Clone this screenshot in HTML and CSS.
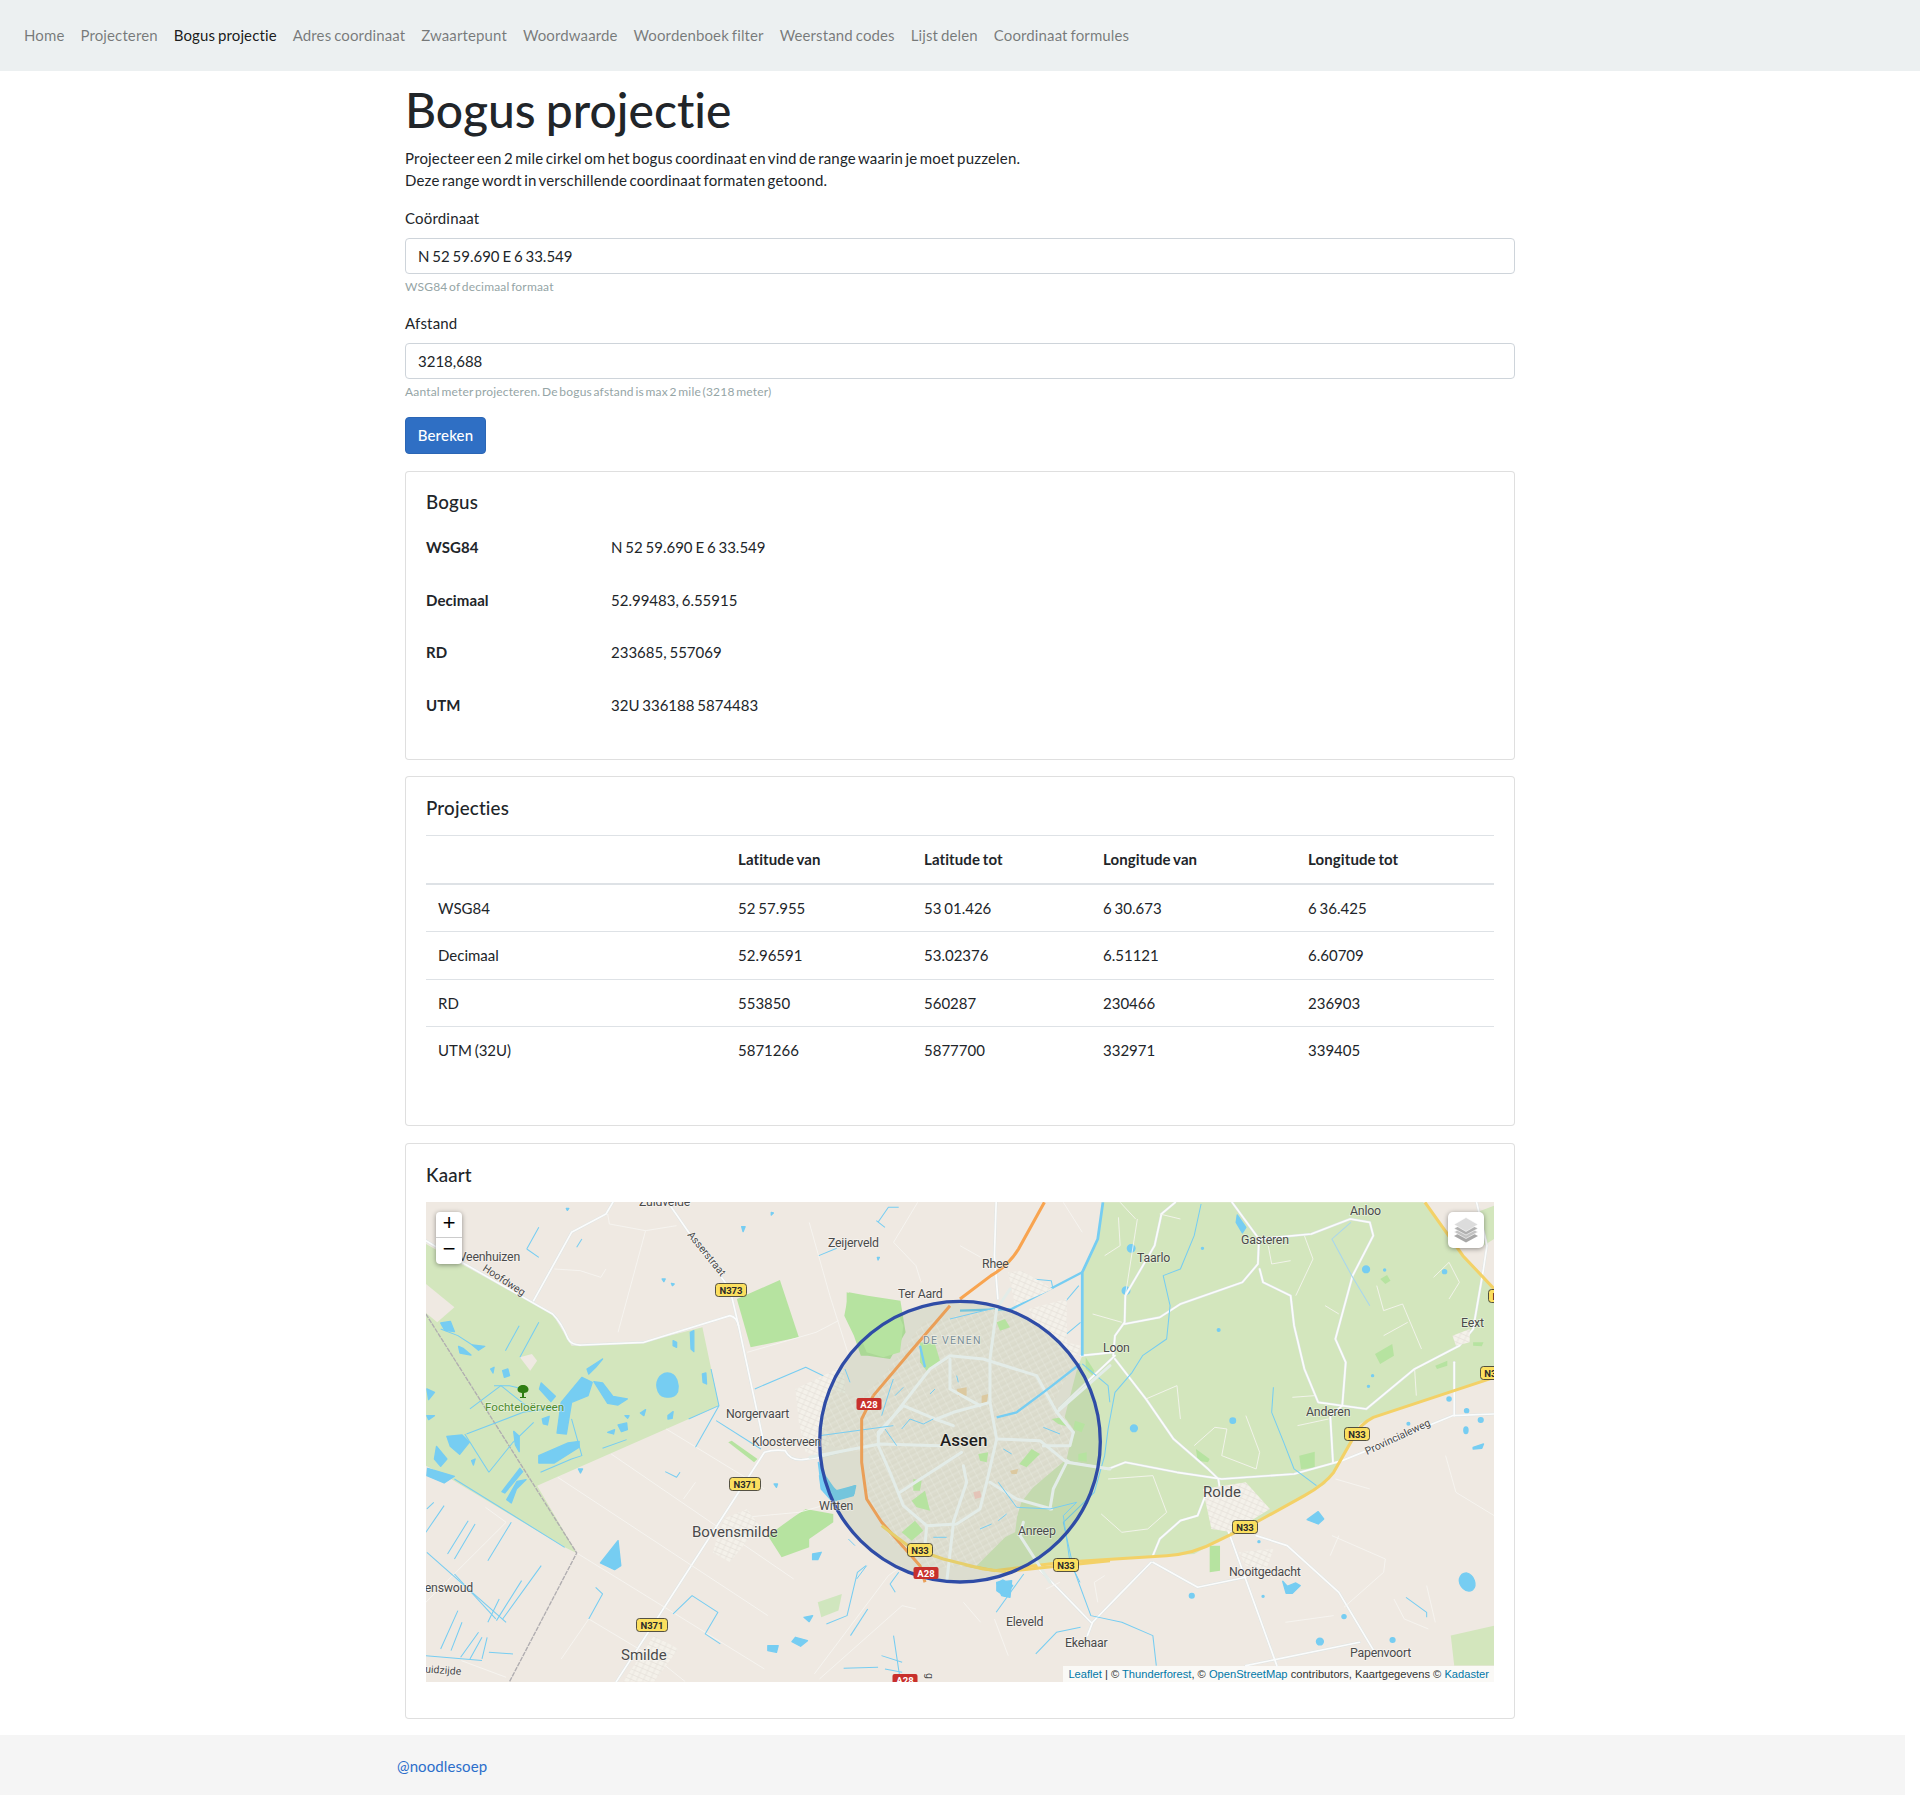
FILE: index.html
```html
<!DOCTYPE html>
<html lang="nl">
<head>
<meta charset="utf-8">
<title>Bogus projectie</title>
<link rel="stylesheet" href="styles.css">
</head>
<body>
<nav class="navbar">
  <a class="nav-link" href="#">Home</a>
  <a class="nav-link" href="#">Projecteren</a>
  <a class="nav-link active" href="#">Bogus projectie</a>
  <a class="nav-link" href="#">Adres coordinaat</a>
  <a class="nav-link" href="#">Zwaartepunt</a>
  <a class="nav-link" href="#">Woordwaarde</a>
  <a class="nav-link" href="#">Woordenboek filter</a>
  <a class="nav-link" href="#">Weerstand codes</a>
  <a class="nav-link" href="#">Lijst delen</a>
  <a class="nav-link" href="#">Coordinaat formules</a>
</nav>
<main class="container">
  <h1 class="page-title">Bogus projectie</h1>
  <p class="intro">Projecteer een 2 mile cirkel om het bogus coordinaat en vind de range waarin je moet puzzelen.<br>Deze range wordt in verschillende coordinaat formaten getoond.</p>
  <div class="form-group">
    <label class="form-label" for="coord">Coördinaat</label>
    <input class="form-input" id="coord" type="text" value="N 52 59.690 E 6 33.549">
    <small class="form-help">WSG84 of decimaal formaat</small>
  </div>
  <div class="form-group">
    <label class="form-label" for="dist">Afstand</label>
    <input class="form-input" id="dist" type="text" value="3218,688">
    <small class="form-help">Aantal meter projecteren. De bogus afstand is max 2 mile (3218 meter)</small>
  </div>
  <button class="btn" type="button">Bereken</button>

  <section class="card card-bogus">
    <h5 class="card-title">Bogus</h5>
    <dl class="facts">
      <dt>WSG84</dt><dd>N 52 59.690 E 6 33.549</dd>
      <dt>Decimaal</dt><dd>52.99483, 6.55915</dd>
      <dt>RD</dt><dd>233685, 557069</dd>
      <dt>UTM</dt><dd>32U 336188 5874483</dd>
    </dl>
  </section>

  <section class="card card-table">
    <h5 class="card-title">Projecties</h5>
    <table class="table">
      <thead>
        <tr><th class="c1"></th><th class="c2">Latitude van</th><th class="c3">Latitude tot</th><th class="c4">Longitude van</th><th class="c5">Longitude tot</th></tr>
      </thead>
      <tbody>
        <tr><td>WSG84</td><td>52 57.955</td><td>53 01.426</td><td>6 30.673</td><td>6 36.425</td></tr>
        <tr><td>Decimaal</td><td>52.96591</td><td>53.02376</td><td>6.51121</td><td>6.60709</td></tr>
        <tr><td>RD</td><td>553850</td><td>560287</td><td>230466</td><td>236903</td></tr>
        <tr><td>UTM (32U)</td><td>5871266</td><td>5877700</td><td>332971</td><td>339405</td></tr>
      </tbody>
    </table>
  </section>

  <section class="card card-map">
    <h5 class="card-title">Kaart</h5>
    <div class="map">
      <svg class="map-svg" viewBox="0 0 1068 480" width="1068" height="480" aria-hidden="true">
        <defs>
          <pattern id="hatch" width="6" height="5" patternUnits="userSpaceOnUse" patternTransform="rotate(24) scale(2.9)">
            <rect width="6" height="5" fill="#f4f1ea"/>
            <path d="M0 2.5H6M3 0V5" stroke="#e2ded5" stroke-width=".6" fill="none"/>
          </pattern>
          <pattern id="hatch-in" width="7" height="6" patternUnits="userSpaceOnUse" patternTransform="rotate(-28) scale(3)">
            <rect width="7" height="6" fill="#dcdccd"/>
            <path d="M0 3H7M3.5 0V6" stroke="#e5e7dc" stroke-width=".6" fill="none"/>
            <path d="M0 1H7" stroke="#d0d1c1" stroke-width=".3" fill="none"/>
          </pattern>
        </defs>
        <rect width="1068" height="480" fill="#efe9e2"/>

        <!-- west half -->
        <g transform="translate(-6,-13) scale(.3444,.3333)">
          <path class="green" d="M17,165L120,225 385,375 440,470 650,460 820,415 868,650 340,890 455,1092 420,1075 90,870 17,830Z"/>
          <path class="beige" d="M17,285L100,355 50,400 17,372Z"/>
          <path class="beige" d="M290,505L325,495 340,515 320,545Z"/>
          <path class="park" d="M920,330L1045,273 1100,445 960,475Z"/>
          <path class="park" d="M895,760L905,755 980,810 970,820Z"/>
          <path class="park" d="M1010,1040L1090,980 1120,960 1200,975 1200,1000 1130,1050 1130,1075 1050,1105Z"/>
          <path class="water" d="M718,552C748,552 752,590 748,608 738,630 702,630 692,608 680,580 695,554 718,552Z"/>
          <path class="water" d="M575,1055L583,1130 565,1142 524,1122Z"/>
          <path class="water" d="M505,578L530,582 560,622 602,630 575,648 545,643Z"/>
          <path class="water" d="M410,640L470,565 500,580 488,620 440,640 425,735 398,732Z"/>
          <path class="water" d="M485,540L530,510 510,535 490,555Z"/>
          <path class="water" d="M78,742L122,738 143,760 115,796 88,772Z"/>
          <path class="water" d="M48,772L78,810 60,832 42,810Z"/>
          <path class="water" d="M22,838L100,862 70,882 20,860Z"/>
          <path class="water" d="M345,800L430,762 462,757 462,775 390,822 345,822Z"/>
          <path class="water" d="M252,932L282,877 308,872 280,900 265,942Z"/>
          <path class="water" d="M238,908L290,838 298,848 246,912Z"/>
          <path class="water" d="M112,472L125,478 148,498 116,492Z"/>
          <path class="water" d="M152,468L188,472 170,484Z"/>
          <path class="water" d="M60,402L88,397 100,428 72,424Z"/>
          <path class="water" d="M352,582L393,622 380,638 347,600Z"/>
          <path class="water" d="M272,727L288,742 288,788 277,768Z"/>
          <path class="water" d="M355,690L375,682 370,708 358,705Z"/>
          <path class="water" d="M595,680L607,680 603,688Z"/>
          <path class="water" d="M720,680L735,668 732,688 720,690Z"/>
          <path class="water" d="M640,672L655,662 650,680Z"/>
          <path class="water" d="M545,730L565,722 562,735Z"/>
          <path class="water" d="M575,708L600,702 602,722 585,728Z"/>
          <path class="water" d="M735,455L745,460 745,475 735,470Z"/>
          <path class="water" d="M785,430L795,425 795,488 787,480Z"/>
          <path class="water" d="M820,555L830,552 832,585 822,580Z"/>
          <path class="water" d="M240,545L255,540 260,560 245,565Z"/>
          <path class="water" d="M205,540L215,535 212,552Z"/>
          <path class="water" d="M20,600L42,610 25,632Z"/>
          <path class="water" d="M20,680L42,680 25,692Z"/>
          <path class="water" d="M150,815L160,810 155,828Z"/>
          <path class="water" d="M460,840L472,840 466,852Z"/>
          <path class="water" d="M1090,1345L1125,1355 1105,1372 1080,1358Z"/>
          <path class="water" d="M1010,1370L1040,1370 1035,1390 1010,1385Z"/>
          <path class="water" d="M1115,1285L1140,1280 1130,1298Z"/>
          <path class="water" d="M1140,1095L1165,1090 1155,1112 1140,1112Z"/>
          <path class="water" d="M1160,860L1210,905 1265,890 1260,915 1195,935 1165,900Z"/>
          <path class="water" d="M1028,885L1038,885 1035,895Z"/>
          <path class="water" d="M703,270L712,270 708,278ZM730,283L738,285 733,290ZM934,113L944,113 938,128ZM1020,70L1026,72 1020,78ZM1328,205L1334,205 1330,213ZM425,58L432,58 428,64Z"/>
          <path class="park" d="M1245,310L1300,320 1395,335 1410,430 1365,510 1300,500 1280,500 1260,440 1232,380Z"/>
          <path class="park" d="M1155,1240L1225,1215 1215,1265 1165,1285Z" opacity=".55"/>

          <g class="road-case">
            <path d="M17,155L130,225 385,375Q410,400 430,450 440,470 470,468L650,460 900,380Q920,385 925,410L1000,770"/>
            <path d="M570,1478L1000,790Q1030,780 1060,785 1075,815 1110,812L1160,805 1290,770"/>
            <path d="M720,40L780,130 900,300 925,410"/>
            <path d="M330,335L440,130 540,75 560,40"/>
          </g>
          <g class="road">
            <path d="M17,155L130,225 385,375Q410,400 430,450 440,470 470,468L650,460 900,380Q920,385 925,410L1000,770"/>
            <path d="M570,1478L1000,790Q1030,780 1060,785 1075,815 1110,812L1160,805 1290,770"/>
            <path d="M720,40L780,130 900,300 925,410"/>
            <path d="M330,335L440,130 540,75 560,40"/>
          </g>
          <g class="lane">
            <path d="M545,75L550,105 655,125 745,110"/>
            <path d="M655,125L575,430"/>
            <path d="M1130,100L1190,320 1245,500"/>
            <path d="M1375,160L1440,230 1455,280M1375,160L1445,40"/>
            <path d="M950,490L1150,430 1215,395"/>
            <path d="M390,240L465,245 525,265 540,240"/>
            <path d="M400,865L1010,1280"/>
            <path d="M555,795L1085,1170"/>
            <path d="M715,720L1000,900"/>
            <path d="M765,930L800,880"/>
            <path d="M410,1410L490,1290 700,1420 770,1478"/>
            <path d="M455,1092L1000,1440"/>
            <path d="M190,955L250,1000 17,1240"/>
            <path d="M1145,1455L1360,1160 1400,1130"/>
            <path d="M1160,1470L1400,1250 1440,1260"/>
            <path d="M120,1415L250,1465"/>
            <path d="M890,990L1100,970 1170,950"/>
          </g>
          <path class="border" d="M17,375L455,1092 260,1478"/>
          <g class="canal">
            <path d="M972,600L1120,535 1190,570"/>
            <path d="M845,540L868,650 780,690"/>
            <path d="M868,650L800,775"/>
            <path d="M860,695L990,780"/>
            <path d="M20,1090L250,1300"/>
            <path d="M100,1155L220,1290"/>
            <path d="M20,960L40,940M17,1030L70,950M80,1095L140,995M100,1110L160,1005M197,1115L265,1000M222,1295L295,1175M197,1300L230,1230M240,1290L352,1130"/>
            <path d="M60,1380L110,1265M90,1385L122,1300M118,1405L170,1330M145,1410L180,1345M180,1410L195,1345"/>
            <path d="M17,1400L180,1415M200,1390L270,1395"/>
            <path d="M100,870L420,1075"/>
            <path d="M490,1290L530,1215 510,1195"/>
            <path d="M735,1275L790,1220 865,1270 828,1335 872,1365"/>
            <path d="M712,848L745,865 755,850"/>
            <path d="M310,180L345,115M310,180L345,205"/>
            <path d="M455,175L470,150"/>
            <path d="M248,485L288,410M290,505L345,400"/>
            <path d="M1330,100L1360,55 1390,55M1325,95L1350,115"/>
            <path d="M1158,200L1210,178"/>
            <path d="M1230,1438L1330,1435"/>
            <path d="M1180,1305L1240,1280 1270,1150 1295,1130"/>
            <path d="M1250,1340L1300,1260"/>
            <path d="M135,735L300,670 430,650"/>
            <path d="M145,660L235,590 320,660"/>
            <path d="M200,850L130,735"/>
            <path d="M200,850L270,760 330,700"/>
            <path d="M350,850L440,810 470,800 440,690"/>
            <path d="M1375,1340L1395,1478M1340,1400L1400,1420M1350,1440L1400,1450"/>
            <path d="M1380,1210L1365,1185 1390,1150"/>
            <path d="M530,778L600,752"/>
            <path d="M215,590L260,590 300,600"/>
            <path d="M60,420L110,440 170,480"/>
          </g>
          <path class="town" d="M1090,600L1230,530 1240,700 1160,800 1120,790 1100,700Z"/>
          <path class="town" d="M880,990L950,960 985,1010 900,1120 850,1090Z"/>
          <path class="town" d="M590,1478L680,1340 750,1380 680,1478Z"/>
        </g>

        <!-- east half -->
        <g transform="translate(534,-13) scale(.3444,.3333)">
          <path class="green" d="M415,40L780,40 1345,40 1460,200 1551,300 1551,565 1200,685 1160,705 1140,750 1085,850 1060,885 1000,920 860,1000 750,1055 680,1095 600,1100 300,1120 100,1145 -20,1125 60,1080 160,1030 170,950 270,820 340,540 355,500 355,250 400,150Z"/>
          <path class="green" d="M1425,1340L1551,1310 1551,1430 1435,1430Z"/>
          <path class="green" d="M1500,70L1551,50 1551,150 1520,170Z"/>
          <path class="park" d="M985,800L1030,788 1030,838 990,840Z"/>
          <path class="park" d="M725,1070L755,1070 755,1145 725,1150Z"/>
          <path class="park" d="M685,780L725,810 720,820 690,815Z"/>
          <path class="park" d="M1205,495L1255,465 1260,500 1220,525Z"/>
          <path class="park" d="M1380,530L1415,515 1415,530 1385,540Z"/>
          <path class="park" d="M1220,270L1240,258 1250,275 1235,285Z"/>
          <path class="park" d="M1490,460L1520,460 1515,472 1490,470Z"/>
          <path class="park" d="M365,505L390,545 385,560 365,540Z"/>
          <path class="water" d="M1470,1152C1493,1157 1503,1190 1488,1203 1470,1215 1447,1190 1450,1170 1454,1157 1460,1152 1470,1152Z"/>
          <path class="water" d="M1040,968L1056,990 1040,1005 1008,992Z"/>
          <path class="water" d="M125,1173L153,1190 130,1222 107,1205 107,1182Z"/>
          <path class="water" d="M937,1177L950,1192 975,1182 988,1190 965,1213 947,1213Z"/>
          <circle class="water" cx="505" cy="718" r="10"/>
          <circle class="water" cx="792" cy="695" r="8"/>
          <circle class="water" cx="482" cy="305" r="11"/>
          <circle class="water" cx="497" cy="178" r="11"/>
          <circle class="water" cx="1179" cy="241" r="10"/>
          <circle class="water" cx="1407" cy="248" r="6"/>
          <circle class="water" cx="1420" cy="630" r="6"/>
          <circle class="water" cx="1471" cy="665" r="6"/>
          <circle class="water" cx="1512" cy="693" r="7"/>
          <ellipse class="water" cx="1469" cy="724" rx="6" ry="10"/>
          <circle class="water" cx="1302" cy="704" r="4"/>
          <circle class="water" cx="673" cy="1220" r="7"/>
          <circle class="water" cx="1115" cy="1283" r="6"/>
          <circle class="water" cx="1045" cy="1358" r="10"/>
          <circle class="water" cx="1256" cy="1353" r="7"/>
          <circle class="water" cx="868" cy="1058" r="3"/>
          <circle class="water" cx="751" cy="423" r="4"/>
          <circle class="water" cx="704" cy="178" r="3"/>
          <circle class="water" cx="1186" cy="592" r="3"/>
          <circle class="water" cx="1198" cy="560" r="3"/>
          <circle class="water" cx="1233" cy="243" r="3"/>
          <circle class="water" cx="880" cy="1222" r="3"/>
          <path class="water" d="M1490,775L1520,765 1515,778 1490,780Z"/>
          <path class="water" d="M805,78L830,115 820,132 802,100Z"/>
          <g class="road-case">
            <path d="M625,40L585,75 565,170 480,320 478,400 450,440 445,500"/>
            <path d="M350,500L445,490M280,665L450,500"/>
            <path d="M478,405L580,385 640,345 820,280 865,225 868,150 790,40"/>
            <path d="M868,150L1020,135 1133,90 1190,100 1200,140 1140,260 1090,450 1120,520 1110,650 1075,680 1083,820"/>
            <path d="M870,240L880,280 960,320 970,410 1000,540 1040,640 1180,660 1320,540 1450,470 1490,420 1520,240 1530,170 1500,40"/>
            <path d="M450,510L540,630 620,750 720,840 750,870 770,1000 920,1430"/>
            <path d="M290,800L320,820 430,840 480,820 630,850 760,870 970,855 1110,815 1430,680 1551,675"/>
            <path d="M1435,680L1435,520"/>
            <path d="M560,1100L580,1050 640,995 690,980 720,900"/>
            <path d="M560,1120L690,1195 830,1165M860,1040L950,1070 1100,1210 1210,1400"/>
            <path d="M555,1120L460,1220 385,1300 370,1340M380,1300L220,1130"/>
            <path d="M830,1430L1160,1360"/>
            <path d="M105,40L100,200 110,330"/>
          </g>
          <g class="road">
            <path d="M625,40L585,75 565,170 480,320 478,400 450,440 445,500"/>
            <path d="M350,500L445,490M280,665L450,500"/>
            <path d="M478,405L580,385 640,345 820,280 865,225 868,150 790,40"/>
            <path d="M868,150L1020,135 1133,90 1190,100 1200,140 1140,260 1090,450 1120,520 1110,650 1075,680 1083,820"/>
            <path d="M870,240L880,280 960,320 970,410 1000,540 1040,640 1180,660 1320,540 1450,470 1490,420 1520,240 1530,170 1500,40"/>
            <path d="M450,510L540,630 620,750 720,840 750,870 770,1000 920,1430"/>
            <path d="M290,800L320,820 430,840 480,820 630,850 760,870 970,855 1110,815 1430,680 1551,675"/>
            <path d="M1435,680L1435,520"/>
            <path d="M560,1100L580,1050 640,995 690,980 720,900"/>
            <path d="M560,1120L690,1195 830,1165M860,1040L950,1070 1100,1210 1210,1400"/>
            <path d="M555,1120L460,1220 385,1300 370,1340M380,1300L220,1130"/>
            <path d="M830,1430L1160,1360"/>
            <path d="M105,40L100,200 110,330"/>
          </g>
          <g class="lane">
            <path d="M630,590L540,630M630,590L640,690"/>
            <path d="M680,770L740,715 775,720 760,800"/>
            <path d="M830,680L870,790 860,840 760,800"/>
            <path d="M430,870L560,860 600,970 545,1020 470,1030 410,975"/>
            <path d="M965,625L1030,620M980,710L1070,690"/>
            <path d="M1320,540L1325,620M1285,345L1230,365 1210,290M1285,345L1340,480"/>
            <path d="M1375,265L1420,220 1450,280 1420,330"/>
            <path d="M1060,350L1100,375M1230,440L1300,400"/>
            <path d="M895,170L905,225 960,215M1000,140L1025,210 975,320"/>
            <path d="M640,90L580,75M510,90L465,40M460,85L465,170 420,200"/>
            <path d="M515,90L480,320M385,375L470,400"/>
            <path d="M1090,870L1190,900M1410,800L1440,910 1551,980"/>
            <path d="M1080,1040L1235,1110 1230,1150 1115,1255M1100,1040L1075,1100"/>
            <path d="M945,1300L1085,1280M1260,1230L1290,1290 1360,1320"/>
            <path d="M1355,1190L1380,1300"/>
            <path d="M420,1160L390,1180 400,1240M250,1200L290,1180"/>
            <path d="M100,1290L140,1400M10,1240L60,1300"/>
            <path d="M300,40L355,130M0,170L60,205"/>
          </g>
          <g class="canal">
            <path d="M700,45L680,140 640,240 590,260 610,350 600,450 530,500 500,550 450,610 430,720 420,800 390,910 300,1000 330,1140 380,1280 470,1300 560,1340 570,1430"/>
            <path d="M910,595L905,670 940,760 970,840 1035,890"/>
            <path d="M220,1395L280,1330 350,1315"/>
            <path d="M105,1270L185,1155"/>
            <path d="M355,525L430,590 435,640"/>
            <path d="M210,270L265,275 270,300"/>
            <path d="M1295,1225L1355,1270 1355,1285"/>
            <path d="M300,345L345,290 M310,435L350,400"/>
          </g>
          <path class="canal-faint" d="M1135,100L1080,150 1140,265 1190,350"/>
          <path class="canal-wide" d="M415,40L400,150 355,250V500"/>
          <path class="canal-mid" d="M355,250L150,360 0,365"/>
          <path class="town" d="M200,360L310,330 310,460 350,470 340,500 250,470Z"/>
          <path class="town" d="M705,900L830,880 900,960 790,1030 730,1020Z"/>
          <path class="town" d="M810,1090L910,1080 890,1140 830,1130Z"/>
          <path class="town" d="M140,250L180,245 270,300 160,350Z"/>
          <path class="town" d="M1430,440L1480,420 1480,460 1440,470Z"/>
          <path class="motorway" d="M245,40L170,180Q140,230 90,260L0,330"/>
          <path class="yellow" d="M1551,565L1200,685Q1160,705 1140,750L1085,850Q1060,885 1000,920L860,1000 750,1055Q680,1095 600,1100L300,1120 100,1145 0,1125"/>
          <path class="yellow" d="M1350,40L1460,200 1551,300"/>
        </g>

        <!-- circle area -->
        <g transform="translate(384,87) scale(.3333)">
          <path class="water" d="M25,520L45,560 80,610 135,590 130,620 75,635 35,600Z"/>
          <path class="water" d="M560,880L605,875 600,925 575,920Z"/>
          <circle class="circle-fill" cx="450" cy="458" r="421"/>
          <path class="town-in" d="M340,100L550,60 700,120 790,230 730,340 790,420 770,510 640,620 610,720 500,830 350,840 250,760 170,620 180,500 60,470 40,390 70,300 150,330 220,260Z"/>
          <path class="park" d="M560,100L585,90 600,115 570,125Z"/>
          <path class="park" d="M725,390L755,385 780,415 745,405Z"/>
          <path class="park" d="M795,395L825,405 815,430 790,420Z"/>
          <path class="park" d="M805,495L830,490 830,518 805,515Z"/>
          <path class="park" d="M628,525L665,480 690,495 650,535Z"/>
          <path class="park" d="M505,495L535,490 530,520 510,515Z"/>
          <path class="park" d="M310,570L335,575 330,605 310,605Z"/>
          <path class="park" d="M305,635L345,605 360,665 320,655Z"/>
          <path class="park" d="M275,730L315,695 340,725 305,755Z"/>
          <path class="park" d="M330,160L375,165 390,215 350,245 330,220Z"/>
          <path class="park" d="M110,10L170,30 250,40 280,110 270,190 220,205 170,190 150,140 110,90Z"/>
          <path class="tan" d="M440,300L470,295 470,320 445,322Z"/>
          <path class="tan" d="M515,320L535,315 530,342 515,342Z"/>
          <path class="tan" d="M600,545L625,540 620,555 605,555Z"/>
          <path class="pink" d="M490,610L510,605 515,625 495,630Z"/>
          <g class="road-in">
            <path d="M205,440L360,240 420,200 520,210 680,260 740,370 790,430"/>
            <path d="M560,60L540,210 540,340 560,450 530,580 510,660 440,705 350,710 280,650 240,550 205,470V430"/>
            <path d="M0,505L130,480 210,465 390,470"/>
            <path d="M560,450L690,455 770,520 900,540"/>
            <path d="M205,430L280,350 375,390 430,410"/>
            <path d="M420,210L420,300 510,350"/>
            <path d="M540,340L430,370 380,390"/>
            <path d="M455,490L270,610"/>
            <path d="M540,580L620,630 725,660"/>
            <path d="M790,430L780,470 700,470"/>
            <path d="M430,705L410,880M350,710L345,770"/>
            <path d="M640,700L630,740 720,880"/>
            <path d="M720,660L730,600 770,520"/>
            <path d="M460,530L470,580 430,700"/>
            <path d="M740,370L900,230M560,60L600,0"/>
          </g>
          <g class="canal">
            <path d="M30,440L250,410M275,420L300,390 340,405 370,390"/>
            <path d="M420,90L550,58M255,320L280,295"/>
            <path d="M565,580L620,655 720,660 800,640 760,680 780,820 810,880"/>
            <path d="M510,720L545,705M565,695L590,675"/>
            <path d="M370,745L410,745M115,750L135,770M140,870L170,830M120,280L105,240"/>
            <path d="M700,415L750,435M580,480L605,495"/>
            <path d="M360,315L375,300M440,260L445,280"/>
            <path d="M225,420L260,470"/>
            <path d="M215,380L240,300 250,270"/>
          </g>
          <path class="canal-mid" d="M560,385L620,370 720,295 810,225"/>
          <path class="canal-mid" d="M330,170L345,235"/>
          <path class="motorway in" d="M190,320L155,390 155,520 170,630 215,700 330,830 345,880"/>
          <path class="motorway in" d="M420,50L300,190 190,320"/>
          <path class="yellow in" d="M215,710L300,775 400,810 520,840 590,848"/>
          <path class="yellow" d="M590,848L660,840 900,815"/>
          <circle class="circle" cx="450" cy="458" r="421"/>
        </g>

        <!-- place names -->
        <text class="lbl" x="213" y="4">Zuidvelde</text>
        <text class="lbl end" x="94" y="59">Veenhuizen</text>
        <text class="lbl sm" transform="translate(56,68) rotate(33)">Hoofdweg</text>
        <text class="lbl sm" transform="translate(261,33) rotate(51)">Asserstraat</text>
        <text class="lbl" x="402" y="45">Zeijerveld</text>
        <text class="lbl" x="472" y="96">Ter Aard</text>
        <text class="lbl" x="300" y="216">Norgervaart</text>
        <text class="lbl" x="326" y="244">Kloosterveen</text>
        <text class="lbl forest" x="59" y="209">Fochteloërveen</text>
        <text class="lbl" x="393" y="308">Witten</text>
        <text class="lbl lg" x="266" y="335">Bovensmilde</text>
        <text class="lbl end" x="47" y="390">Veenswoud</text>
        <text class="lbl lg" x="195" y="458">Smilde</text>
        <text class="lbl sm end" transform="translate(35,473) rotate(4)">Zuidzijde</text>
        <text class="lbl" x="556" y="66">Rhee</text>
        <text class="lbl" x="711" y="60">Taarlo</text>
        <text class="lbl" x="815" y="42">Gasteren</text>
        <text class="lbl" x="924" y="13">Anloo</text>
        <text class="lbl" x="1035" y="125">Eext</text>
        <text class="lbl" x="677" y="150">Loon</text>
        <text class="lbl" x="880" y="214">Anderen</text>
        <text class="lbl lg" x="777" y="295">Rolde</text>
        <text class="lbl" x="592" y="333">Anreep</text>
        <text class="lbl" x="803" y="374">Nooitgedacht</text>
        <text class="lbl" x="580" y="424">Eleveld</text>
        <text class="lbl" x="639" y="445">Ekehaar</text>
        <text class="lbl" x="924" y="455">Papenvoort</text>
        <text class="lbl sm" transform="translate(941,253) rotate(-25)">Provincialeweg</text>
        <text class="lbl city" x="514" y="244">Assen</text>
        <text class="lbl quarter" x="497" y="142">DE VENEN</text>
        <text class="lbl sm" transform="translate(500,471) rotate(90)">g</text>

        <!-- tree -->
        <g transform="translate(97,189)">
          <path d="M-1,1H1V6H3V7H-3V6H-1Z" fill="#2f7d12"/>
          <path d="M0,-6C3,-6 5.5,-4 5.5,-1.5 5.5,1 3,2 0,2 -3,2 -5.5,1 -5.5,-1.5 -5.5,-4 -3,-6 0,-6Z" fill="#2f7d12"/>
        </g>

        <!-- shields -->
        <g class="shield yel" transform="translate(305,88)"><rect x="-15.5" y="-6.5" width="31" height="13" rx="3"/><text y="3.5">N373</text></g>
        <g class="shield yel" transform="translate(319,282)"><rect x="-15.5" y="-6.5" width="31" height="13" rx="3"/><text y="3.5">N371</text></g>
        <g class="shield yel" transform="translate(226,423)"><rect x="-15.5" y="-6.5" width="31" height="13" rx="3"/><text y="3.5">N371</text></g>
        <g class="shield yel" transform="translate(494,348)"><rect x="-12.5" y="-6.5" width="25" height="13" rx="3"/><text y="3.5">N33</text></g>
        <g class="shield yel" transform="translate(931,232)"><rect x="-12.5" y="-6.5" width="25" height="13" rx="3"/><text y="3.5">N33</text></g>
        <g class="shield yel" transform="translate(819,325)"><rect x="-12.5" y="-6.5" width="25" height="13" rx="3"/><text y="3.5">N33</text></g>
        <g class="shield yel" transform="translate(640,363)"><rect x="-12.5" y="-6.5" width="25" height="13" rx="3"/><text y="3.5">N33</text></g>
        <g class="shield yel" transform="translate(1067,171)"><rect x="-12.5" y="-6.5" width="25" height="13" rx="3"/><text y="3.5">N33</text></g>
        <g class="shield yel" transform="translate(1078,94)"><rect x="-15.5" y="-6.5" width="31" height="13" rx="3"/><text y="3.5">N376</text></g>
        <g class="shield red" transform="translate(443,202)"><rect x="-12.5" y="-6" width="25" height="12" rx="2"/><text y="3.5">A28</text></g>
        <g class="shield red" transform="translate(500,371)"><rect x="-12.5" y="-6" width="25" height="12" rx="2"/><text y="3.5">A28</text></g>
        <g class="shield red" transform="translate(479,478)"><rect x="-12.5" y="-6" width="25" height="12" rx="2"/><text y="3.5">A28</text></g>
      </svg>

      <div class="zoom-control">
        <a class="zoom-btn" href="#">+</a>
        <a class="zoom-btn" href="#">−</a>
      </div>
      <a class="layers-control" href="#" aria-label="Lagen">
        <svg viewBox="0 0 26 26" width="26" height="26">
          <path d="M13 12.5L25 19 13 25.5 1 19Z" fill="#a8a8a8"/>
          <path d="M13 8.5L25 15 13 21.5 1 15Z" fill="#c2c2c2" stroke="#fff" stroke-width=".6"/>
          <path d="M13 5L25 11.5 13 18 1 11.5Z" fill="#b0b0b0" stroke="#fff" stroke-width=".6"/>
          <path d="M13 .5L25 7.5 13 14.5 1 7.5Z" fill="#dcdcdc" stroke="#fff" stroke-width=".6"/>
        </svg>
      </a>
      <div class="attribution"><a href="#">Leaflet</a> | © <a href="#">Thunderforest</a>, © <a href="#">OpenStreetMap</a> contributors, Kaartgegevens © <a href="#">Kadaster</a></div>
    </div>
  </section>
</main>
<footer class="footer">
  <div class="footer-inner"><a href="#">@noodlesoep</a></div>
</footer>
</body>
</html>
```
FILE: styles.css
```css
* { box-sizing: border-box; }
html, body { margin: 0; padding: 0; }
body {
  font-family: Lato, "Liberation Sans", sans-serif;
  font-size: 15px;
  line-height: 1.5;
  letter-spacing: .18px;
  word-spacing: -1.6px;
  font-variant-ligatures: none;
  color: #212529;
  background: #fff;
}
a { text-decoration: none; }

.navbar {
  display: flex;
  align-items: center;
  height: 71px;
  padding: 0 16px;
  background: #ecf0f1;
}
.nav-link {
  padding: 8px;
  letter-spacing: .12px;
  word-spacing: -1px;
  color: rgba(0, 0, 0, .5);
}
.nav-link.active { color: rgba(0, 0, 0, .9); }

.container { width: 1110px; margin: 0 auto; padding-top: 10px; }
.page-title {
  margin: 0 0 8px;
  font-size: 48px;
  font-weight: 500;
  line-height: 1.2;
  letter-spacing: 0;
  word-spacing: -2px;
}
.intro { margin: 0 0 15.4px; }

.form-group { margin-bottom: 15px; }
.form-label { display: block; margin-bottom: 8.5px; }
.form-input {
  display: block;
  width: 100%;
  height: 36px;
  padding: 6px 12px;
  font: inherit;
  letter-spacing: 0;
  word-spacing: -1px;
  color: #212529;
  background: #fff;
  border: 1px solid #ced4da;
  border-radius: 4px;
}
.form-help {
  display: block;
  margin-top: 3.5px;
  font-size: 12px;
  line-height: 19.5px;
  color: #95a5a6;
}
.btn {
  display: block;
  width: 81px;
  height: 37px;
  padding: 0;
  font: inherit;
  font-weight: 500;
  letter-spacing: inherit;
  color: #fff;
  background: #2f6fc4;
  border: 1px solid #2b66b5;
  border-radius: 4px;
}

.card {
  margin-bottom: 16.5px;
  padding: 20px;
  background: #fff;
  border: 1px solid rgba(0, 0, 0, .125);
  border-radius: 4px;
}
.card-bogus { margin-top: 16.7px; margin-bottom: 16px; padding-top: 19px; }
.card-title {
  margin: 0 0 16px;
  font-size: 18.75px;
  font-weight: 500;
  line-height: 22.5px;
}

.facts {
  display: grid;
  grid-template-columns: 185px 1fr;
  row-gap: 30.2px;
  margin: 22.75px 0 0;
  padding-bottom: 22.5px;
}
.card-bogus .card-title { margin-bottom: 0; }
.facts dt { font-weight: 700; letter-spacing: .1px; }
.facts dd { margin: 0; letter-spacing: 0; word-spacing: -1px; }

.table {
  width: 100%;
  margin-bottom: 31.5px;
  table-layout: fixed;
  border-collapse: collapse;
}
.table th, .table td {
  padding: 12px;
  text-align: left;
  border-top: 1px solid #dee2e6;
}
.table td { letter-spacing: 0; word-spacing: -1px; }
.table th { font-weight: 700; letter-spacing: .1px; word-spacing: -1px; border-bottom: 2px solid #dee2e6; }
.c1 { width: 300px; }
.c2 { width: 186px; }
.c3 { width: 179px; }
.c4 { width: 205px; }
.c5 { width: 198px; }

.card-map { padding-bottom: 35.5px; }
.map { position: relative; height: 480px; overflow: hidden; }
.map-svg { display: block; }

.green { fill: #d3e6bd; }
.beige { fill: #efe9e2; }
.park { fill: #b6e3a0; }
.water { fill: #76cdf2; stroke: #76cdf2; stroke-width: 4; stroke-linejoin: round; }
.tan { fill: #dcc9a0; }
.pink { fill: #e4c4b8; }
.town { fill: url(#hatch); }
.town-in { fill: url(#hatch-in); }
.road-case path { fill: none; stroke: #dde4e4; stroke-width: 7.5; stroke-linejoin: round; stroke-linecap: round; }
.road path { fill: none; stroke: #fbfcfc; stroke-width: 5; stroke-linejoin: round; stroke-linecap: round; }
.road-in path { fill: none; stroke: #e3ece8; stroke-width: 9; stroke-linejoin: round; stroke-linecap: round; }
.lane path { fill: none; stroke: #f7f6f2; stroke-width: 2.5; stroke-linejoin: round; }
.canal path { fill: none; stroke: #76cdf2; stroke-width: 3; stroke-linejoin: round; }
.canal-faint { fill: none; stroke: #a8d6ee; stroke-width: 3; }
.canal-wide { fill: none; stroke: #76cdf2; stroke-width: 8; stroke-linejoin: round; }
.canal-mid { fill: none; stroke: #76cdf2; stroke-width: 7; stroke-linejoin: round; }
.border { fill: none; stroke: #b0adb0; stroke-width: 4; stroke-dasharray: 14 3; }
.motorway { fill: none; stroke: #f8a450; stroke-width: 9; stroke-linejoin: round; }
.motorway.in { stroke: #ea9f58; }
.yellow { fill: none; stroke: #f3d167; stroke-width: 9; stroke-linejoin: round; }
.yellow.in { stroke: #e6cf6c; }
.circle-fill { fill: rgb(104, 150, 90); fill-opacity: .14; }
.circle { fill: none; stroke: #2f4ca6; stroke-width: 10; }

.lbl {
  font-family: Roboto, "Liberation Sans", sans-serif;
  font-size: 12.3px;
  letter-spacing: -.2px;
  word-spacing: 0;
  fill: #4a4a4a;
  paint-order: stroke;
  stroke: rgba(255, 255, 255, .45);
  stroke-width: 1.5px;
}
.lbl.end { text-anchor: end; }
.lbl.sm { font-size: 10.5px; letter-spacing: 0; }
.lbl.lg { font-size: 15px; letter-spacing: 0; }
.lbl.forest { font-size: 11.6px; letter-spacing: 0; fill: #4d8a2c; }
.lbl.city { font-size: 17px; font-weight: 500; letter-spacing: 0; fill: #1d1d1d; }
.lbl.quarter { font-size: 10.5px; letter-spacing: 1.2px; fill: #7a8f98; }

.shield text {
  font-family: Roboto, "Liberation Sans", sans-serif;
  font-size: 9.5px;
  font-weight: 700;
  letter-spacing: 0;
  word-spacing: 0;
  text-anchor: middle;
}
.shield.yel rect { fill: #fbdf5f; stroke: #2b2b2b; stroke-width: .8; }
.shield.yel text { fill: #2b2b2b; }
.shield.red rect { fill: #c8302c; }
.shield.red text { fill: #fff; }

.zoom-control {
  position: absolute;
  top: 10px;
  left: 10px;
  width: 26px;
  background: #fff;
  border-radius: 4px;
  box-shadow: 0 1px 5px rgba(0, 0, 0, .4);
}
.zoom-btn {
  display: block;
  height: 26px;
  font: 400 22px/26px "Liberation Mono", monospace;
  letter-spacing: 0;
  text-align: center;
  color: #000;
  border-bottom: 1px solid #ccc;
}
.zoom-btn:last-child { border-bottom: 0; }

.layers-control {
  position: absolute;
  top: 10px;
  right: 10px;
  display: flex;
  align-items: center;
  justify-content: center;
  width: 36px;
  height: 36px;
  background: #fff;
  border-radius: 5px;
  box-shadow: 0 1px 5px rgba(0, 0, 0, .4);
}

.attribution {
  position: absolute;
  right: 0;
  bottom: 0;
  padding: 0 5px;
  font: 11.15px/16.5px "Liberation Sans", Arial, sans-serif;
  letter-spacing: 0;
  word-spacing: 0;
  color: #333;
  background: rgba(255, 255, 255, .7);
}
.attribution a { color: #0078a8; }

.footer {
  width: 1905px;
  height: 60px;
  background: #f5f5f5;
}
.footer-inner { padding: 19.5px 0 0 397px; letter-spacing: .1px; }
.footer-inner a { color: #2c6ecb; }
```
